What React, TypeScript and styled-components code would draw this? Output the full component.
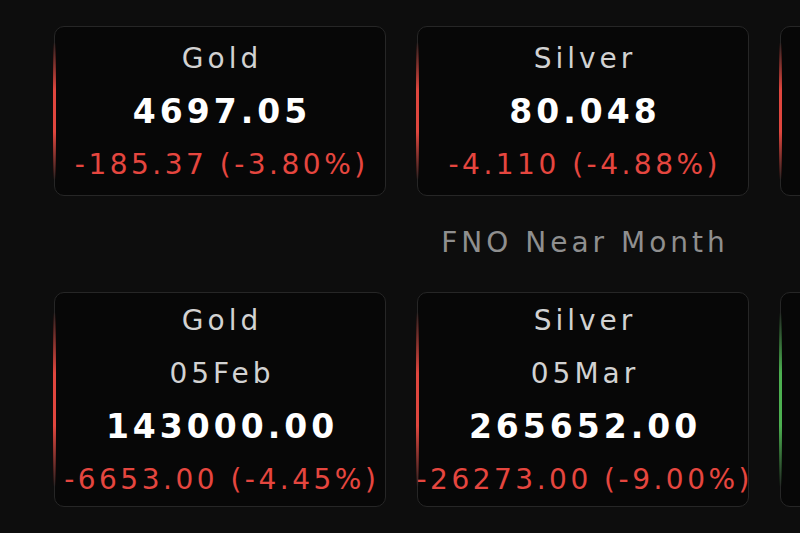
import React from 'react';
import styled, { createGlobalStyle } from 'styled-components';

const GlobalStyle = createGlobalStyle`
  html, body {
    margin: 0;
    padding: 0;
    background: #0d0d0d;
    overflow: hidden;
  }
  body {
    font-family: 'DejaVu Sans', 'Noto Sans', sans-serif;
  }
`;

const Page = styled.main`
  width: 800px;
  height: 533px;
  padding: 26px 0 0 54px;
  box-sizing: border-box;
  overflow: hidden;
`;

const Track = styled.section`
  width: 1058px;
  display: flex;
  flex-direction: column;
`;

const CardRow = styled.div`
  display: flex;
  gap: 31px;
`;

type Trend = 'up' | 'down';

const Card = styled.div<{ $trend: Trend; $tall?: boolean }>`
  position: relative;
  flex: 0 0 332px;
  width: 332px;
  min-width: 0;
  box-sizing: border-box;
  padding: ${(p) => (p.$tall ? '1px 0 0' : '5px 0 4px')};
  background: #070707;
  border: 1.5px solid #262626;
  border-radius: 10px;
  display: flex;
  flex-direction: column;
  align-items: center;

  // accent line on the left edge
  &::before {
    content: '';
    position: absolute;
    left: -2px;
    top: 9%;
    bottom: 9%;
    width: 2.5px;
    border-radius: 2px;
    background: linear-gradient(
      to bottom,
      transparent,
      ${(p) => (p.$trend === 'up' ? '#4caf50' : '#e0463e')} 35%,
      ${(p) => (p.$trend === 'up' ? '#4caf50' : '#e0463e')} 65%,
      transparent
    );
  }
`;

const Title = styled.div`
  line-height: 53px;
  font-size: 28px;
  letter-spacing: 4px;
  text-indent: 4px;
  color: #d2d2d2;
  white-space: nowrap;
`;

const Value = styled.div`
  line-height: 53px;
  font-size: 33px;
  font-weight: 700;
  letter-spacing: 4px;
  text-indent: 4px;
  color: #ffffff;
  white-space: nowrap;
`;

const Change = styled.div<{ $trend: Trend }>`
  line-height: 53px;
  font-size: 28px;
  letter-spacing: 3.5px;
  text-indent: 3.5px;
  color: ${(p) => (p.$trend === 'up' ? '#4caf50' : '#e5463f')};
  white-space: nowrap;
`;

const SectionTitle = styled.h3`
  margin: 27px 0 29px;
  line-height: 40px;
  text-align: center;
  font-size: 28px;
  font-weight: 400;
  letter-spacing: 4px;
  text-indent: 4px;
  color: #8f8f8f;
`;

type Quote = {
  name: string;
  expiry?: string;
  price: string;
  change: string;
  trend: Trend;
};

const spot: Quote[] = [
  { name: 'Gold', price: '4697.05', change: '-185.37 (-3.80%)', trend: 'down' },
  { name: 'Silver', price: '80.048', change: '-4.110 (-4.88%)', trend: 'down' },
];

const fno: Quote[] = [
  { name: 'Gold', expiry: '05Feb', price: '143000.00', change: '-6653.00 (-4.45%)', trend: 'down' },
  { name: 'Silver', expiry: '05Mar', price: '265652.00', change: '-26273.00 (-9.00%)', trend: 'down' },
];

const QuoteCard = ({ q }: { q: Quote }) => (
  <Card $trend={q.trend} $tall={!!q.expiry}>
    <Title>{q.name}</Title>
    {q.expiry && <Title>{q.expiry}</Title>}
    <Value>{q.price}</Value>
    <Change $trend={q.trend}>{q.change}</Change>
  </Card>
);

const App = () => (
  <>
    <GlobalStyle />
    <Page>
      <Track>
        <CardRow>
          {spot.map((q) => (
            <QuoteCard key={q.name} q={q} />
          ))}
          <Card $trend="down" />
        </CardRow>
        <SectionTitle>FNO Near Month</SectionTitle>
        <CardRow>
          {fno.map((q) => (
            <QuoteCard key={q.name} q={q} />
          ))}
          <Card $trend="up" />
        </CardRow>
      </Track>
    </Page>
  </>
);

export default App;
